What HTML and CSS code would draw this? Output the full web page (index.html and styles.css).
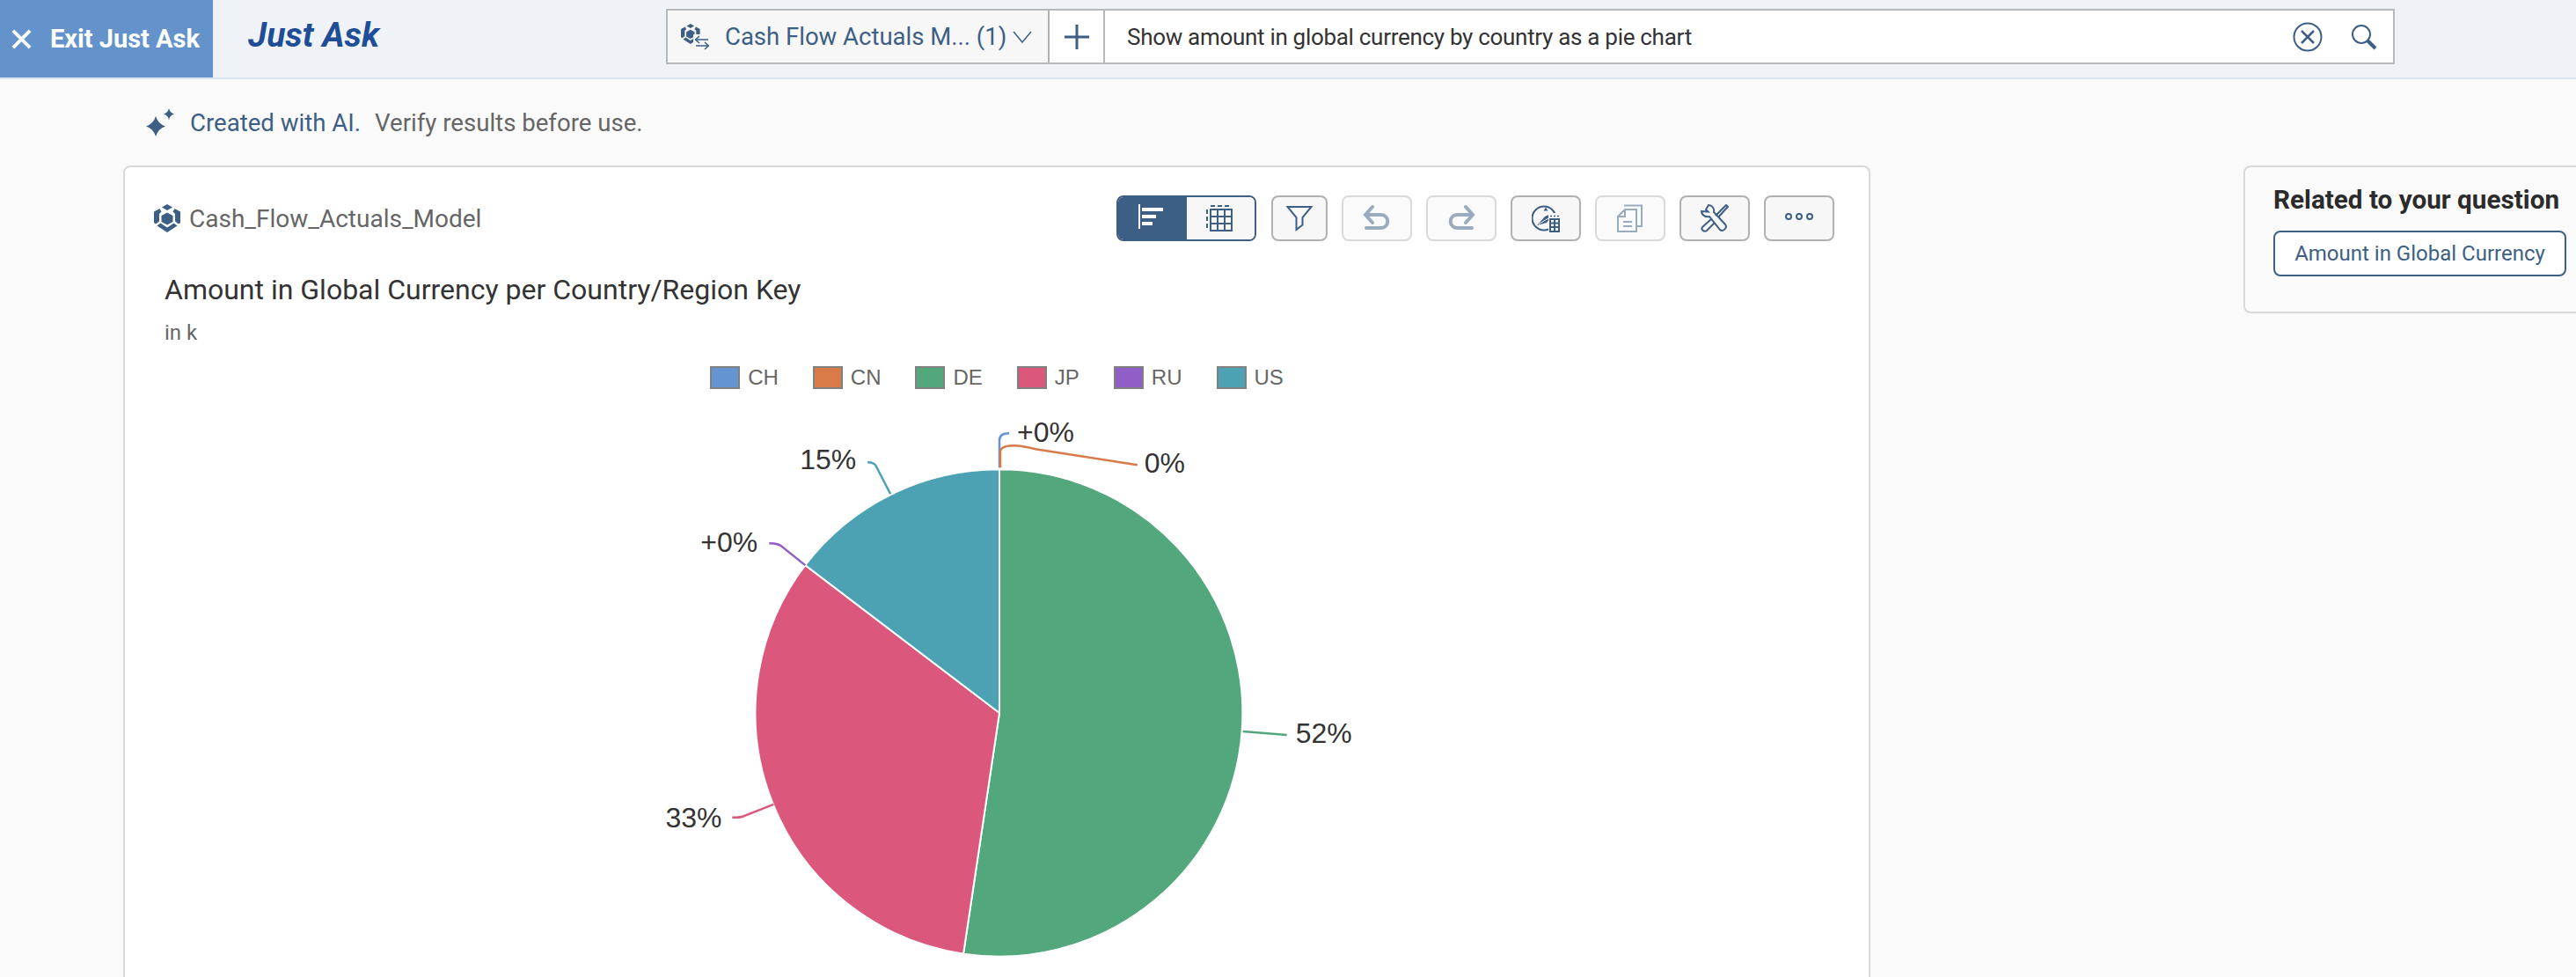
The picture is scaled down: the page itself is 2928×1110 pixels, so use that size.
FILE: index.html
```html
<!DOCTYPE html>
<html lang="en">
<head>
    <meta charset="UTF-8">
    <title>Just Ask</title>
    <link rel="stylesheet" href="styles.css">
</head>
<body>

<header class="topbar">
    <button class="exit-btn">
        <svg class="exit-icon" viewBox="0 0 24 24"><path d="M2 2 22 22M22 2 2 22"/></svg>
        Exit Just Ask
    </button>
    <div class="app-title">Just Ask</div>
    <div class="askbar">
        <div class="model-select">
            <svg class="model-icon" viewBox="0 0 32 30">
                <g class="fill" transform="scale(0.72)">
                    <path d="M15 0 21 3.500 15 7 9 3.500ZM6.500 5 8.500 8.500 6 11V19.500L2 22.500 0 21V8.500ZM23.500 5 21.500 8.500 24 11V19.500L28 22.500 30 21V8.500ZM15 9.500 21.500 13V20L15 23.500 8.500 20V13ZM3.500 24.500 7.500 21.500 15 26.500 22.500 21.500 26.500 24.500 15 32Z"/>
                </g>
                <rect class="backing" x="14" y="12" width="18" height="18"/>
                <path class="line" d="M17 18H31M21 14 16.500 18 21 22M17 25H31M27 21 31.500 25 27 29"/>
            </svg>
            <span class="model-name">Cash Flow Actuals M... (1)</span>
            <svg class="chevron" viewBox="0 0 22 14"><path d="M1 1 11 13 21 1"/></svg>
        </div>
        <div class="add-cell">
            <svg class="plus" viewBox="0 0 28 28"><path d="M14 0V28M0 14H28"/></svg>
        </div>
        <div class="question">
            <span class="question-text">Show amount in global currency by country as a pie chart</span>
            <svg class="clear-icon" viewBox="0 0 34 34">
                <circle cx="17" cy="17" r="15.500"/>
                <path d="M10 10 24 24M24 10 10 24"/>
            </svg>
            <svg class="search-icon" viewBox="0 0 30 30">
                <circle cx="12" cy="12" r="10"/>
                <path class="handle" d="M19 19 28 28"/>
            </svg>
        </div>
    </div>
</header>

<main class="content">
    <div class="notice">
        <svg class="sparkle" viewBox="0 0 32 32">
            <path d="M11 9Q13.500 17.500 22 20.500 13.500 23.500 11 32 8.500 23.500 0 20.500 8.500 17.500 11 9Z"/>
            <path d="M26 0Q27 5 32 6.500 27 8 26 13 25 8 20 6.500 25 5 26 0Z"/>
        </svg>
        <span class="notice-ai">Created with AI.</span>
        <span class="notice-verify">Verify results before use.</span>
    </div>

    <div class="panels">
        <section class="result-card">
            <div class="card-head">
                <div class="model-label">
                    <svg class="cube" viewBox="0 0 30 32">
                        <path d="M15 0 21 3.500 15 7 9 3.500ZM6.500 5 8.500 8.500 6 11V19.500L2 22.500 0 21V8.500ZM23.500 5 21.500 8.500 24 11V19.500L28 22.500 30 21V8.500ZM15 9.500 21.500 13V20L15 23.500 8.500 20V13ZM3.500 24.500 7.500 21.500 15 26.500 22.500 21.500 26.500 24.500 15 32Z"/>
                    </svg>
                    <span>Cash_Flow_Actuals_Model</span>
                </div>
                <div class="toolbar">
                    <div class="segmented">
                        <button class="seg seg-on">
                            <svg class="icon" viewBox="0 0 32 32"><path class="white" d="M0 0H2V28H0ZM4 4H28V8H4ZM4 12H20V16H4ZM4 20H16V24H4Z"/></svg>
                        </button>
                        <button class="seg">
                            <svg class="icon" viewBox="0 0 32 32">
                                <path class="stroke" d="M5 2H28M1 6V30" stroke-dasharray="5 3"/>
                                <path class="stroke" d="M5 6H29V30H5ZM5 14H29M5 22H29M13 6V30M21 6V30"/>
                            </svg>
                        </button>
                    </div>
                    <button class="tool">
                        <svg class="icon" viewBox="0 0 32 32"><path class="stroke" d="M2.500 3H29.500L19.500 15V23.500L12.500 29V15Z"/></svg>
                    </button>
                    <button class="tool tool-off">
                        <svg class="icon" viewBox="0 0 32 32"><path class="stroke thick" d="M11 3 3 12 11 21M3 12H20C31 12 31 27 20 27H4"/></svg>
                    </button>
                    <button class="tool tool-off">
                        <svg class="icon" viewBox="0 0 32 32"><path class="stroke thick" d="M21 3 29 12 21 21M29 12H12C1 12 1 27 12 27H28"/></svg>
                    </button>
                    <button class="tool">
                        <svg class="icon" viewBox="0 0 32 32">
                            <circle class="stroke" cx="14" cy="16" r="13.500"/>
                            <path class="solid" d="M26 9 17 21 6 24 15 14Z"/>
                            <path class="cut" d="M8 22.500 19 16"/>
                            <path class="solid" d="M16 3.500 18.500 7.500H13.500Z"/>
                            <rect class="backing" x="19" y="10" width="13" height="22"/>
                            <path class="stroke thin" d="M21 13.500H23M25 13.500H27M29 13.500H31"/>
                            <path class="stroke" d="M21 17H31V31H21ZM21 21.500H31M21 26H31M26 17V31"/>
                        </svg>
                    </button>
                    <button class="tool tool-off">
                        <svg class="icon" viewBox="0 0 32 32">
                            <path class="stroke" d="M9 1.500H29V25H24"/>
                            <path class="stroke" d="M10 6H23V31H2V14ZM10 6V14H2M8 20H18M8 25H18"/>
                        </svg>
                    </button>
                    <button class="tool">
                        <svg class="icon" viewBox="0 0 32 32">
                            <path class="stroke" d="M9 1 6 6 8.500 8.500 1 8C1 12 5 15 10 14L22 29C25 32 31 27 28 23L15 9C16 5 13 1 9 1Z"/>
                            <path class="stroke" d="M17 13 26 4 29 1 31 3 28 6 20 15M12 17 2 26C0 29 4 32 7 30L16 21"/>
                        </svg>
                    </button>
                    <button class="tool">
                        <svg class="icon dots" viewBox="0 0 32 12">
                            <circle cx="4" cy="6" r="3"/><circle cx="16" cy="6" r="3"/><circle cx="28" cy="6" r="3"/>
                        </svg>
                    </button>
                </div>
            </div>

            <h2 class="chart-title">Amount in Global Currency per Country/Region Key</h2>
            <div class="chart-unit">in k</div>

            <div class="legend">
                <div class="legend-item"><i class="swatch ch"></i>CH</div>
                <div class="legend-item"><i class="swatch cn"></i>CN</div>
                <div class="legend-item"><i class="swatch de"></i>DE</div>
                <div class="legend-item"><i class="swatch jp"></i>JP</div>
                <div class="legend-item"><i class="swatch ru"></i>RU</div>
                <div class="legend-item"><i class="swatch us"></i>US</div>
            </div>

            <!-- viewBox uses page coordinates so the slices are easy to check -->
            <svg class="pie" viewBox="140 450 1984 660">
                <path class="slice de-fill" d="M1135 811V534A277 277 0 1 1 1094 1085Z"/>
                <path class="slice jp-fill" d="M1135 811 1094 1085A277 277 0 0 1 914 643Z"/>
                <path class="slice us-fill" d="M1135 811 914 643A277 277 0 0 1 1135 534Z"/>
                <path class="leader" stroke="#6595d0" d="M1135 532V501Q1135 493 1146 493"/>
                <path class="leader" stroke="#d97b49" d="M1136 532V514Q1136 507 1152 507 1160 507 1176 511L1292 529"/>
                <path class="leader" stroke="#4ca1b3" d="M1011 562 995 531Q993 526 985 526"/>
                <path class="leader" stroke="#8f5fc7" d="M914 643 889 623Q885 618 873 618"/>
                <path class="leader" stroke="#52a77d" d="M1412 832 1462 836"/>
                <path class="leader" stroke="#dc577c" d="M878 915 845 928Q842 930 831 930"/>
                <text class="pie-label" x="1155" y="503">+0%</text>
                <text class="pie-label" x="1300" y="538">0%</text>
                <text class="pie-label" x="908" y="534">15%</text>
                <text class="pie-label" x="795" y="628">+0%</text>
                <text class="pie-label" x="1472" y="845">52%</text>
                <text class="pie-label" x="755" y="941">33%</text>
            </svg>
        </section>

        <aside class="related-card">
            <h3 class="related-title">Related to your question</h3>
            <button class="related-btn">Amount in Global Currency</button>
        </aside>
    </div>
</main>

</body>
</html>
```

FILE: styles.css
```css
* {
    box-sizing: border-box;
}

html, body {
    height: 100%;
}

body {
    margin: 0;
    background-color: #fafafa;
    font-family: 'Roboto', 'Liberation Sans', sans-serif;
    color: #666666;
    overflow: hidden;
}

button {
    font-family: inherit;
    cursor: pointer;
}

/* top bar */
.topbar {
    height: 90px;
    display: flex;
    background-color: #eff3f8;
    border-bottom: 2px solid #d9e4f0;
}

.exit-btn {
    width: 242px;
    display: flex;
    align-items: center;
    gap: 21px;
    padding: 0 0 0 13px;
    border: none;
    background-color: #6393ca;
    color: #ffffff;
    font-size: 29px;
    font-weight: 700;
    white-space: nowrap;
}

.exit-icon {
    width: 23px;
    height: 23px;
    fill: none;
    stroke: #ffffff;
    stroke-width: 4;
}

.app-title {
    width: 515px;
    padding: 18px 0 0 40px;
    font-size: 39px;
    line-height: 44px;
    font-weight: 700;
    font-style: italic;
    color: #1f4e96;
}

.askbar {
    width: 1965px;
    height: 63px;
    margin-top: 10px;
    display: flex;
    border: 2px solid #b8b8b8;
    background-color: #ffffff;
}

.model-select {
    width: 434px;
    display: flex;
    align-items: center;
    padding-left: 15px;
    background-color: #f7f7f7;
    border-right: 2px solid #b0b0b0;
    color: #3d5f85;
    font-size: 27.500px;
}

.model-icon {
    width: 32px;
    height: 30px;
    margin-right: 18px;
}

.model-icon .fill {
    fill: #3d5f85;
}

.model-icon .backing {
    fill: #f7f7f7;
}

.model-icon .line {
    fill: none;
    stroke: #3d5f85;
    stroke-width: 1.500;
}

.model-name {
    width: 327px;
    white-space: nowrap;
}

.chevron {
    width: 22px;
    height: 14px;
    fill: none;
    stroke: #3d5f85;
    stroke-width: 1.500;
}

.add-cell {
    width: 63px;
    display: flex;
    align-items: center;
    justify-content: center;
    border-right: 2px solid #b8b8b8;
}

.plus {
    width: 28px;
    height: 28px;
    fill: none;
    stroke: #3d5f85;
    stroke-width: 3;
}

.question {
    flex: 1;
    display: flex;
    align-items: center;
    padding-left: 25px;
    color: #333333;
    font-size: 26px;
}

.question-text {
    flex: 1;
    letter-spacing: -0.300px;
}

.clear-icon {
    width: 34px;
    height: 34px;
    margin-right: 32px;
    fill: none;
    stroke: #3d5f85;
    stroke-width: 2;
}

.clear-icon path {
    stroke-width: 2.500;
}

.search-icon {
    width: 30px;
    height: 30px;
    margin-right: 18px;
    fill: none;
    stroke: #3d5f85;
    stroke-width: 2;
}

.search-icon .handle {
    stroke-width: 4;
}

/* page content, the result card runs off the bottom of the window */
.content {
    height: 1020px;
    padding-left: 140px;
    overflow: hidden;
}

.notice {
    height: 98px;
    display: flex;
    align-items: center;
    padding: 0 0 0 26px;
    font-size: 27.600px;
}

.sparkle {
    width: 32px;
    height: 32px;
    margin-right: 18px;
    fill: #3d5f85;
}

.notice-ai {
    color: #3d5f85;
    margin-right: 16px;
}

.panels {
    display: flex;
    gap: 424px;
    align-items: flex-start;
}

.result-card {
    width: 1986px;
    height: 1000px;
    flex-shrink: 0;
    padding-top: 32px;
    background-color: #ffffff;
    border: 2px solid #d9d9d9;
    border-radius: 8px;
}

.card-head {
    display: flex;
    justify-content: space-between;
    padding: 0 39px 0 33px;
}

.model-label {
    display: flex;
    align-items: center;
    gap: 10px;
    font-size: 28px;
}

.cube {
    width: 30px;
    height: 32px;
    fill: #3d5f85;
}

/* toolbar */
.toolbar {
    display: flex;
    gap: 16px;
}

.segmented {
    display: flex;
    width: 159px;
    height: 52px;
    margin-right: 1px;
    border: 2px solid #3d5f85;
    border-radius: 8px;
    overflow: hidden;
}

.seg {
    flex: 1;
    padding: 0;
    border: none;
    display: flex;
    align-items: center;
    justify-content: center;
    background-color: #f7f7f7;
}

.seg-on {
    background-color: #3d5f85;
}

.tool {
    width: 80px;
    height: 52px;
    padding: 0;
    display: flex;
    align-items: center;
    justify-content: center;
    background-color: #f7f7f7;
    border: 2px solid #b0b0b0;
    border-radius: 8px;
}

.toolbar > .tool:nth-child(2) {
    width: 64px;
}

.tool-off {
    background-color: #fafafa;
    border-color: #d9d9d9;
}

.icon {
    width: 32px;
    height: 32px;
}

.icon .white {
    fill: #ffffff;
}

.icon .stroke {
    fill: none;
    stroke: #3d5f85;
    stroke-width: 2;
}

.icon .solid {
    fill: #3d5f85;
}

.icon .cut {
    fill: none;
    stroke: #f7f7f7;
    stroke-width: 1;
}

.icon .backing {
    fill: #f7f7f7;
}

.tool-off .icon {
    opacity: 0.5;
}

.icon .thick {
    stroke-width: 4;
    stroke-linecap: round;
}

.icon .thin {
    stroke-width: 1.500;
}

.dots {
    height: 12px;
    margin-top: -4px;
    fill: none;
    stroke: #3d5f85;
    stroke-width: 2;
}

/* chart */
.chart-title {
    margin: 35px 0 0 45px;
    font-size: 32px;
    line-height: 40px;
    font-weight: 400;
    color: #333333;
}

.chart-unit {
    margin: 14px 0 0 45px;
    font-size: 24px;
    line-height: 30px;
}

.legend {
    display: flex;
    justify-content: center;
    gap: 39px;
    margin-top: 23px;
    font-family: 'Liberation Sans', sans-serif;
    font-size: 24px;
    line-height: 26px;
}

.legend-item {
    display: flex;
    align-items: center;
    gap: 9px;
}

.swatch {
    width: 34px;
    height: 26px;
    border: 2px solid #808080;
}

.ch { background-color: #6595d0; }
.cn { background-color: #d97b49; }
.de { background-color: #52a77d; }
.jp { background-color: #dc577c; }
.ru { background-color: #8f5fc7; }
.us { background-color: #4ca1b3; }

.pie {
    display: block;
    width: 1982px;
    height: 660px;
    margin-top: 7px;
}

.slice {
    stroke: #ffffff;
    stroke-width: 2;
}

.de-fill { fill: #52a77d; }
.jp-fill { fill: #dc577c; }
.us-fill { fill: #4ca1b3; }

.leader {
    fill: none;
    stroke-width: 2.500;
}

.pie-label {
    font-family: 'Liberation Sans', sans-serif;
    font-size: 32px;
    fill: #333333;
}

/* right panel */
.related-card {
    width: 420px;
    height: 168px;
    flex-shrink: 0;
    padding: 20px 0 0 32px;
    background-color: #fafafa;
    border: 2px solid #d9d9d9;
    border-radius: 8px;
}

.related-title {
    margin: 0;
    font-size: 29.700px;
    line-height: 34px;
    font-weight: 700;
    color: #2b2b2b;
    white-space: nowrap;
}

.related-btn {
    display: block;
    width: 333px;
    height: 52px;
    margin-top: 18px;
    padding: 0;
    background-color: #ffffff;
    border: 2px solid #3d5f85;
    border-radius: 8px;
    color: #3d5f85;
    font-size: 24px;
}
```
